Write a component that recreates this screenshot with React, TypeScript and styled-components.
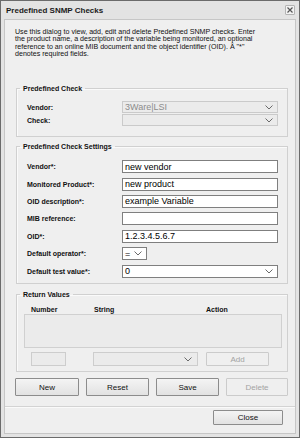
import styled, { createGlobalStyle } from "styled-components";

const GlobalStyle = createGlobalStyle`
  html, body {
    margin: 0;
    padding: 0;
    background: #ffffff;
  }
  body {
    font-family: "Liberation Sans", Arial, sans-serif;
    color: #000000;
  }
  * {
    box-sizing: border-box;
  }
`;

const Chevron = () => (
  <svg width="8" height="5" viewBox="0 0 8 5">
    <polyline points="0.5,0.5 4,4 7.5,0.5" fill="none" stroke="#6a6a6a" strokeWidth="1" />
  </svg>
);

const SelectBox = ({ value = "", disabled = false, width }: { value?: string; disabled?: boolean; width?: number }) => (
  <Select $disabled={disabled} style={width ? { width } : undefined}>
    <SelectValue $disabled={disabled}>{value}</SelectValue>
    <Chevron />
  </Select>
);

const App = () => {
  return (
    <>
      <GlobalStyle />
      <Window>
        <TitleBar>
          <Title>Predefined SNMP Checks</Title>
          <CloseBox>
            <svg width="6" height="6" viewBox="0 0 6 6">
              <path d="M0.5 0.5 L5.5 5.5 M5.5 0.5 L0.5 5.5" stroke="#555" strokeWidth="1.2" />
            </svg>
          </CloseBox>
        </TitleBar>
        <Panel>
          <Intro>
            <IntroLine>Use this dialog to view, add, edit and delete Predefined SNMP checks. Enter</IntroLine>
            <IntroLine>the product name, a description of the variable being monitored, an optional</IntroLine>
            <IntroLine>reference to an online MIB document and the object identifier (OID). Â "*"</IntroLine>
            <IntroLine>denotes required fields.</IntroLine>
          </Intro>

          <Group $top={25.5} $bottom={10}>
            <Legend>Predefined Check</Legend>
            <Rows $top={8.5} $row={12} $gap={1}>
              <Label>Vendor:</Label>
              <SelectBox value="3Ware|LSI" disabled />
              <Label>Check:</Label>
              <SelectBox disabled />
            </Rows>
          </Group>

          <Group $top={4.5} $bottom={5}>
            <Legend>Predefined Check Settings</Legend>
            <Rows $top={9.5} $row={13} $gap={4.4}>
              <Label>Vendor*:</Label>
              <TextInput>new vendor</TextInput>
              <Label>Monitored Product*:</Label>
              <TextInput>new product</TextInput>
              <Label>OID description*:</Label>
              <TextInput>example Variable</TextInput>
              <Label>MIB reference:</Label>
              <TextInput />
              <Label>OID*:</Label>
              <TextInput>1.2.3.4.5.6.7</TextInput>
              <Label>Default operator*:</Label>
              <SelectBox value="=" width={25} />
              <Label>Default test value*:</Label>
              <SelectBox value="0" />
            </Rows>
          </Group>

          <Group $top={6.5} $bottom={5}>
            <Legend>Return Values</Legend>
            <ReturnHeader>
              <span>Number</span>
              <span>String</span>
              <span>Action</span>
            </ReturnHeader>
            <ReturnList />
            <ReturnControls>
              <DisabledField />
              <DisabledSelect>
                <Chevron />
              </DisabledSelect>
              <Button $disabled $width={63} $height={14}>
                Add
              </Button>
            </ReturnControls>
          </Group>

          <ButtonRow>
            <Button $width={64} $height={18}>New</Button>
            <Button $width={63} $height={18}>Reset</Button>
            <Button $width={63} $height={18}>Save</Button>
            <Button $width={62} $height={18} $disabled>Delete</Button>
          </ButtonRow>

          <Footer>
            <Button $width={70} $height={15}>Close</Button>
          </Footer>
        </Panel>
      </Window>
    </>
  );
};

const Window = styled.div`
  width: 300px;
  height: 438px;
  display: flex;
  flex-direction: column;
  padding: 0 3px 3px 3px;
  background: #e3e3e3;
  border: 1px solid #6b6b6b;
`;

const TitleBar = styled.div`
  height: 18px;
  display: flex;
  align-items: center;
  justify-content: space-between;
  padding: 0 1px 0 2px;
`;

const Title = styled.span`
  font-size: 8px;
  font-weight: 700;
  color: #1a1a1a;
`;

const CloseBox = styled.div`
  width: 10px;
  height: 10px;
  display: flex;
  align-items: center;
  justify-content: center;
  border: 1px solid #b4b4b4;
  border-radius: 1px;
  background: #f2f2f2;
  margin-top: -1px;
`;

const Panel = styled.div`
  flex: 1;
  display: flex;
  flex-direction: column;
  background: #efefef;
  border: 1px solid #c6c6c6;
`;

const Intro = styled.div`
  display: flex;
  flex-direction: column;
  padding: 9px 10px 0 10px;
`;

const IntroLine = styled.span`
  height: 7.3px;
  font-size: 7.1px;
  line-height: 7.3px;
  color: #111111;
  white-space: nowrap;
`;

const Group = styled.fieldset<{ $top: number; $bottom: number }>`
  margin: ${({ $top }) => $top}px 7px 0 11px;
  padding: 0 9px ${({ $bottom }) => $bottom}px 10px;
  min-width: 0;
  border: 1px solid #d0d0d0;
  box-shadow: inset 1px 1px 0 #fafafa;
`;

const Legend = styled.legend`
  margin-left: -7px;
  padding: 0 3px;
  font-size: 7px;
  line-height: 9px;
  font-weight: 700;
  color: #111111;
`;

const Rows = styled.div<{ $top: number; $row: number; $gap: number }>`
  display: grid;
  grid-template-columns: 95px 156px;
  grid-auto-rows: ${({ $row }) => $row}px;
  row-gap: ${({ $gap }) => $gap}px;
  margin-top: ${({ $top }) => $top}px;
`;

const Label = styled.span`
  display: flex;
  align-items: center;
  font-size: 7px;
  font-weight: 700;
  color: #111111;
`;

const TextInput = styled.div`
  display: flex;
  align-items: center;
  padding-left: 2px;
  background: #ffffff;
  border: 1px solid #7f7f7f;
  font-size: 9px;
  color: #000000;
  white-space: nowrap;
  overflow: hidden;
`;

const Select = styled.div<{ $disabled: boolean }>`
  display: flex;
  align-items: center;
  justify-content: space-between;
  padding: 0 4px 0 2px;
  background: ${({ $disabled }) => ($disabled ? "#ebebeb" : "#ffffff")};
  border: 1px solid ${({ $disabled }) => ($disabled ? "#cacaca" : "#7f7f7f")};
`;

const SelectValue = styled.span<{ $disabled: boolean }>`
  font-size: 9px;
  color: ${({ $disabled }) => ($disabled ? "#8c8c8c" : "#000000")};
`;

const ReturnHeader = styled.div`
  display: grid;
  grid-template-columns: 63px 112px 1fr;
  height: 9px;
  margin-top: 6px;
  padding-left: 4px;
  align-items: center;
  font-size: 7px;
  font-weight: 700;
  color: #111111;
`;

const ReturnList = styled.div`
  height: 34px;
  margin: 0 -4px 0 -3px;
  background: #ebebeb;
  border: 1px solid #d0d0d0;
`;

const ReturnControls = styled.div`
  display: grid;
  grid-template-columns: 63px 112px 1fr;
  height: 14px;
  margin-top: 4px;
  padding-left: 4px;
`;

const DisabledField = styled.div`
  width: 35px;
  height: 14px;
  background: #ebebeb;
  border: 1px solid #cdcdcd;
`;

const DisabledSelect = styled.div`
  width: 105px;
  height: 14px;
  margin-left: -1px;
  display: flex;
  align-items: center;
  justify-content: flex-end;
  padding-right: 5px;
  background: #ebebeb;
  border: 1px solid #cdcdcd;
`;

const Button = styled.div<{ $disabled?: boolean; $width: number; $height: number }>`
  width: ${({ $width }) => $width}px;
  height: ${({ $height }) => $height}px;
  display: flex;
  align-items: center;
  justify-content: center;
  font-size: 8px;
  color: ${({ $disabled }) => ($disabled ? "#a3a3a3" : "#111111")};
  border: 1px solid ${({ $disabled }) => ($disabled ? "#cbcbcb" : "#8c8c8c")};
  border-radius: 1px;
  background: ${({ $disabled }) =>
    $disabled ? "#efefef" : "linear-gradient(#f4f4f4, #e2e2e2)"};
`;

const ButtonRow = styled.div`
  display: flex;
  gap: 7px;
  margin-top: 6px;
  padding-left: 10px;
`;

const Footer = styled.div`
  display: flex;
  justify-content: flex-end;
  margin-top: 10px;
  padding: 3px 12px 0 0;
  border-top: 1px solid #d3d3d3;
  box-shadow: inset 0 1px 0 #fafafa;
`;

export default App;
